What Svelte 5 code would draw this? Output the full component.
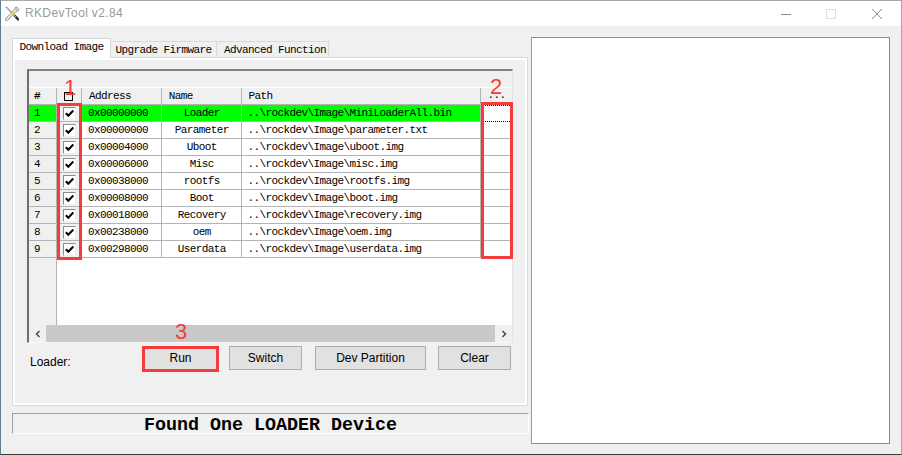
<script>
  const rows = [
    ['1', '0x00000000', 'Loader', '..\\rockdev\\Image\\MiniLoaderAll.bin'],
    ['2', '0x00000000', 'Parameter', '..\\rockdev\\Image\\parameter.txt'],
    ['3', '0x00004000', 'Uboot', '..\\rockdev\\Image\\uboot.img'],
    ['4', '0x00006000', 'Misc', '..\\rockdev\\Image\\misc.img'],
    ['5', '0x00038000', 'rootfs', '..\\rockdev\\Image\\rootfs.img'],
    ['6', '0x00008000', 'Boot', '..\\rockdev\\Image\\boot.img'],
    ['7', '0x00018000', 'Recovery', '..\\rockdev\\Image\\recovery.img'],
    ['8', '0x00238000', 'oem', '..\\rockdev\\Image\\oem.img'],
    ['9', '0x00298000', 'Userdata', '..\\rockdev\\Image\\userdata.img']
  ];
</script>

<div class="win">
  <header class="title">
    <svg class="appicon" viewBox="0 0 16 16" width="16" height="16">
      <path d="M13.5 1 L11 1.6 L10 4 L1.5 12.5 L1.5 14.5 L3.5 14.5 L12 6 L14.4 5 L15 2.5 L13 4 L12 3 Z" fill="#dcdcdc" stroke="#8a8a8a" stroke-width=".7"/>
      <path d="M1.5 1 L3 1 L8 6 L7 7 Z" fill="#b9b9b9" stroke="#8a8a8a" stroke-width=".5"/>
      <path d="M6.5 6 L8 5.5 L11 8.5 L9.5 10 Z" fill="#e8c23a"/>
      <path d="M9.5 10 L11 8.5 L15 12.5 L15 14.5 L13.5 14.5 Z" fill="#2e2a20"/>
      <path d="M10.5 9.5 L12 11" stroke="#e8c23a" stroke-width="1" fill="none"/>
    </svg>
    <span class="wintitle">RKDevTool v2.84</span>
    <div class="caps">
      <svg width="12" height="12" viewBox="0 0 12 12"><path d="M2 6.5h10" stroke="#8c8c8c" fill="none"/></svg>
      <svg width="12" height="12" viewBox="0 0 12 12"><rect x="1.5" y="1.5" width="9" height="9" stroke="#dedede" fill="none"/></svg>
      <svg width="12" height="12" viewBox="0 0 12 12"><path d="M1 1l10 10M11 1L1 11" stroke="#8c8c8c" fill="none"/></svg>
    </div>
  </header>

  <div class="body">
    <div class="left">
      <div class="tabs">
        <div class="tab active">Download Image</div>
        <div class="tab t2">Upgrade Firmware</div>
        <div class="tab t3">Advanced Function</div>
      </div>
      <section class="panel">
        <div class="grid">
          <div class="band"></div>
          <div class="row head">
            <div class="c c0">#</div>
            <div class="c c1"><span class="hbox"></span></div>
            <div class="c c2">Address</div>
            <div class="c c3 left-t">Name</div>
            <div class="c c4">Path</div>
            <div class="c c5 dots">...</div>
          </div>
          {#each rows as r, i}
            <div class="row" class:sel={i === 0}>
              <div class="c c0">{r[0]}</div>
              <div class="c c1"><span class="chk"><svg width="11" height="11" viewBox="0 0 11 11"><path d="M1.8 5.2 L4.3 7.7 L9.3 2.5" stroke="#000" stroke-width="2" fill="none"/></svg></span></div>
              <div class="c c2">{r[1]}</div>
              <div class="c c3">{r[2]}</div>
              <div class="c c4">{r[3]}</div>
              <div class="c c5" class:focus={i === 0}></div>
            </div>
          {/each}
          <div class="filler"><div class="fixed"></div></div>
          <div class="hscroll">
            <div class="arrow"><svg width="8" height="8" viewBox="0 0 8 8"><path d="M5.5 1 L2.5 4 L5.5 7" stroke="#505050" stroke-width="1.6" fill="none"/></svg></div>
            <div class="thumb"></div>
            <div class="arrow r"><svg width="8" height="8" viewBox="0 0 8 8"><path d="M2.5 1 L5.5 4 L2.5 7" stroke="#505050" stroke-width="1.6" fill="none"/></svg></div>
          </div>
        </div>
        <div class="actions">
          <span class="loader">Loader:</span>
          <button class="b-run">Run</button>
          <button class="b-switch">Switch</button>
          <button class="b-dev">Dev Partition</button>
          <button class="b-clear">Clear</button>
        </div>
      </section>
      <div class="status"><span>Found One LOADER Device</span></div>
    </div>
    <div class="pane"></div>
  </div>

  <div class="box b1"></div>
  <div class="box b2"></div>
  <div class="box b3"></div>
  <span class="num n1">1</span>
  <span class="num n2">2</span>
  <span class="num n3">3</span>
</div>

<style>
  :global(body) { margin: 0; background: #fff; }
  .win {
    position: relative; width: 902px; height: 455px; box-sizing: border-box;
    background: #f0f0f0; border-top: 1px solid #a8a8a8; border-right: 1px solid #a8a8a8;
    border-bottom: 1px solid #3c3c3c; border-left: 1px solid #5c7d96;
    display: flex; flex-direction: column; overflow: hidden;
    font-family: "Liberation Mono", monospace; color: #000;
  }
  .title { height: 25px; background: #fff; display: flex; align-items: center; flex: none; }
  .appicon { margin-left: 3px; }
  .wintitle { margin: -2px 0 0 5px; font: 12px "Liberation Sans", sans-serif; color: #999; letter-spacing: .35px; }
  .caps { margin-left: auto; display: flex; gap: 34px; margin-right: 18px; }

  .body { display: flex; flex: 1; min-height: 0; }
  .left { width: 530px; flex: none; padding: 12px 0 0 11px; box-sizing: border-box; }
  .pane {
    width: 359px; height: 407px; margin-top: 11px; box-sizing: border-box; background: #fff;
    border: 1px solid #8b8b93; border-left-color: #9a9a9a; flex: none;
  }

  .tabs { display: flex; height: 19px; align-items: flex-end; position: relative; z-index: 1; }
  .tab {
    height: 16px; box-sizing: border-box; border: 1px solid #d9d9d9; border-bottom: 0; border-left: 0;
    font-size: 11px; letter-spacing: -.6px; line-height: 16px; text-align: center; background: #f0f0f0;
  }
  .tab.active { height: 20px; width: 99px; background: #fff; border-left: 1px solid #d9d9d9; margin-bottom: -1px; line-height: 17px; }
  .t2 { width: 106px; }
  .t3 { width: 112px; padding-left: 5px; }

  .panel {
    width: 516px; height: 349px; box-sizing: border-box; border: 1px solid #d9d9d9;
    outline: none; box-shadow: inset 0 0 0 2px #fff; padding: 11px 13px 0 14px;
  }
  .grid {
    width: 486px; height: 274px; box-sizing: border-box; background: #fff;
    border-top: 2px solid #808080; border-left: 2px solid #6e6e6e;
    border-right: 1px solid #e4e4e4; border-bottom: 1px solid #f8f8f8;
    display: flex; flex-direction: column;
  }
  .band { height: 17px; background: #f0f0f0; border-bottom: 1px solid #fff; flex: none; box-sizing: border-box; }
  .row {
    display: flex; height: 17px; flex: none; box-sizing: border-box;
    font-size: 11px; letter-spacing: -.6px; line-height: 16px;
  }
  .c { box-sizing: border-box; border-right: 1px solid #b4b4b4; border-bottom: 1px solid #b4b4b4; white-space: nowrap; overflow: hidden; background: #fff; }
  .c0 { width: 28px; padding-left: 5px; background: #f0f0f0; }
  .c1 { width: 25px; display: flex; align-items: center; justify-content: center; padding-left: 1px; background: #f0f0f0; }
  .c2 { width: 80px; padding-left: 6px; }
  .c3 { width: 80px; text-align: center; padding-left: 1px; }
  .c3.left-t { text-align: left; padding-left: 7px; }
  .c4 { width: 240px; padding-left: 6px; }
  .c5 { width: 31px; border-right: 0; }
  .head .c { background: #f0f0f0; }
  .head .c0 { font-weight: bold; }
  .head .c1 { padding-left: 0; }
  .head .c2 { padding-left: 7px; }
  .head .c4 { padding-left: 7px; }
  .dots { text-align: center; line-height: 15px; }
  .sel .c { background: #00ff00; }
  .sel .c1 { background: #f0f0f0; }
  .focus { border-top: 1px dotted #000; border-bottom: 1px dotted #000; background: #fff !important; }
  .hbox { width: 7px; height: 7px; border: 1px solid #000; box-sizing: content-box; display: block; }
  .chk { width: 13px; height: 13px; box-sizing: border-box; background: #fff; border: 1px solid #8c8c8c; border-right-color: #f0f0f0; border-bottom-color: #f0f0f0; display: flex; align-items: center; justify-content: center; }
  .filler { flex: 1; min-height: 0; }
  .fixed { width: 28px; height: 100%; box-sizing: border-box; background: #f0f0f0; border-right: 1px solid #b4b4b4; }
  .hscroll { height: 17px; flex: none; display: flex; background: #f0f0f0; }
  .arrow { width: 17px; display: flex; align-items: center; justify-content: center; }
  .thumb { flex: 1; background: #c9c9c9; }

  .actions { display: flex; align-items: flex-start; height: 24px; margin-top: 3px; position: relative; }
  .loader { font: 12px "Liberation Sans", sans-serif; margin: 9px 0 0 3px; width: 113px; }
  button {
    height: 24px; box-sizing: border-box; background: #e1e1e1; border: 1px solid #adadad; border-radius: 0; padding: 0;
    font: 12px "Liberation Sans", sans-serif; color: #000;
  }
  .b-run { width: 75px; margin-right: 11px; }
  .b-switch { width: 73px; margin-right: 13px; }
  .b-dev { width: 111px; margin-right: 12px; }
  .b-clear { width: 73px; }

  .status {
    width: 517px; height: 21px; box-sizing: border-box; margin-top: 7px; padding-top: 2px;
    border: 1px solid #a0a0a0; border-right-color: #fff; border-bottom-color: #fff;
    font: bold 18.33px/19px "Liberation Mono", monospace; text-align: center; white-space: nowrap;
  }

  .box { position: absolute; box-sizing: border-box; border: 3px solid #f43c3c; }
  .b1 { left: 56px; top: 102px; width: 25px; height: 157px; }
  .b2 { left: 480px; top: 101px; width: 32px; height: 157px; }
  .b3 { left: 141px; top: 345px; width: 77px; height: 26px; }
  .num { position: absolute; font: 22px "Liberation Sans", sans-serif; color: #f43c3c; line-height: 22px; }
  .n1 { left: 63px; top: 76px; }
  .n2 { left: 489px; top: 75px; }
  .n3 { left: 174px; top: 320px; }
</style>
